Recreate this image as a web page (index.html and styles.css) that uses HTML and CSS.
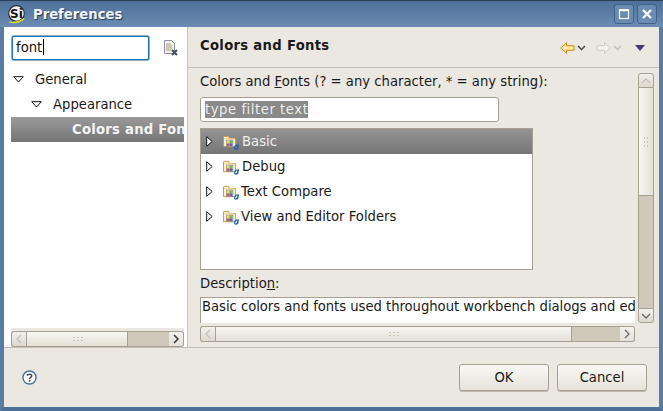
FILE: index.html
```html
<!DOCTYPE html>
<html lang="en">
<head>
    <meta charset="UTF-8">
    <title>Preferences</title>
    <link rel="stylesheet" href="styles.css">
</head>
<body>
<div class="window">
    <div class="titlebar">
        <svg class="app-icon" width="18" height="19" viewBox="0 0 18 19">
            <circle cx="8.5" cy="8.5" r="7.8" fill="#f7f7f2" stroke="#26303c" stroke-width="1.2"/>
            <path d="M1 16.5C7 17.5 12 16 16 13L16.5 14.5C12 18 6 19 1 17.5Z" fill="#e6dc2e"/>
            <text x="2" y="13" class="app-icon-text">Si</text>
        </svg>
        <span class="title">Preferences</span>
        <div class="win-buttons">
            <div class="win-btn">
                <svg width="12" height="12" viewBox="0 0 12 12"><rect x="1.5" y="2" width="9" height="8.5" fill="none" stroke="#fff" stroke-width="1.2"/><path d="M1 2.2h10" stroke="#fff" stroke-width="2"/></svg>
            </div>
            <div class="win-btn">
                <svg width="12" height="12" viewBox="0 0 12 12"><path d="M2 2l8 8M10 2l-8 8" stroke="#fff" stroke-width="2.2"/></svg>
            </div>
        </div>
    </div>

    <div class="main">
        <div class="left">
            <div class="search-row">
                <div class="search-frame">
                    <div class="search-box">font<span class="caret"></span></div>
                </div>
                <svg class="clear-icon" width="16" height="16" viewBox="0 0 16 16">
                    <path d="M1.5 .5h7l3 3v10h-10z" fill="#f2f2e6" stroke="#8b93a6"/>
                    <path d="M3 4h5M3 6h6M3 8h6M3 10h5" stroke="#a8a078"/>
                    <path d="M9 10l5 5M14 10l-5 5" stroke="#4a5260" stroke-width="2.2"/>
                </svg>
            </div>
            <div class="tree">
                <div class="tree-row level-0"><svg class="tw-open" width="11" height="7"><use href="#tw-down"/></svg>General</div>
                <div class="tree-row level-1"><svg class="tw-open" width="11" height="7"><use href="#tw-down"/></svg>Appearance</div>
                <div class="tree-row level-2 selected-row"><span>Colors and Fonts</span></div>
            </div>
            <div class="hscroll left-scroll">
                <div class="sb-btn"><svg width="8" height="10" viewBox="0 0 8 10"><path d="M6 1L2 5l4 4" class="chev-off"/></svg></div>
                <div class="thumb left-thumb"><span class="grip-h"></span></div>
                <div class="trough"></div>
                <div class="sb-btn sb-end"><svg width="8" height="10" viewBox="0 0 8 10"><path d="M2 1l4 4-4 4" class="chev-on"/></svg></div>
            </div>
        </div>

        <div class="right">
            <div class="page-header">
                <span class="page-title">Colors and Fonts</span>
                <div class="nav-icons">
                    <svg width="15" height="12" viewBox="0 0 15 12"><path d="M.8 6L6.5 .7v3h7.5v4.6H6.5v3z" fill="#fde9a0" stroke="#c98a10"/></svg>
                    <svg class="nav-chev" width="9" height="6" viewBox="0 0 9 6"><path d="M1 1l3.5 3.5L8 1" fill="none" stroke="#444" stroke-width="1.5"/></svg>
                    <svg class="nav-gap" width="15" height="12" viewBox="0 0 15 12"><path d="M14.2 6L8.5 .7v3H1v4.6h7.5v3z" fill="#f2f0ea" stroke="#cfccc4"/></svg>
                    <svg class="nav-chev" width="9" height="6" viewBox="0 0 9 6"><path d="M1 1l3.5 3.5L8 1" fill="none" stroke="#c4c2bb" stroke-width="1.5"/></svg>
                    <svg class="nav-menu" width="10" height="6" viewBox="0 0 10 6"><path d="M0 0h10L5 6z" fill="#3f3a72"/></svg>
                </div>
            </div>
            <div class="page-body">
                <div class="content">
                    <div class="label">Colors and <u>F</u>onts (? = any character, * = any string):</div>
                    <div class="filter-box"><span class="filter-text">type filter text</span></div>
                    <div class="list">
                        <div class="list-row list-selected"><svg class="tw-closed" width="7" height="11"><use href="#tw-right"/></svg><svg class="folder" width="17" height="16" viewBox="0 0 18 17"><use href="#folder"/></svg><span class="pad-a">Basic</span></div>
                        <div class="list-row"><svg class="tw-closed" width="7" height="11"><use href="#tw-right"/></svg><svg class="folder" width="17" height="16" viewBox="0 0 18 17"><use href="#folder"/></svg><span class="pad-a">Debug</span></div>
                        <div class="list-row"><svg class="tw-closed" width="7" height="11"><use href="#tw-right"/></svg><svg class="folder" width="17" height="16" viewBox="0 0 18 17"><use href="#folder"/></svg>Text Compare</div>
                        <div class="list-row"><svg class="tw-closed" width="7" height="11"><use href="#tw-right"/></svg><svg class="folder" width="17" height="16" viewBox="0 0 18 17"><use href="#folder"/></svg>View and Editor Folders</div>
                    </div>
                    <div class="label desc-label">Descriptio<u>n</u>:</div>
                    <div class="desc-box">Basic colors and fonts used throughout workbench dialogs and editors.</div>
                    <div class="hscroll body-scroll">
                        <div class="sb-btn"><svg width="8" height="10" viewBox="0 0 8 10"><path d="M6 1L2 5l4 4" class="chev-off"/></svg></div>
                        <div class="thumb body-thumb"><span class="grip-h"></span></div>
                        <div class="trough"></div>
                        <div class="sb-btn sb-end"><svg width="8" height="10" viewBox="0 0 8 10"><path d="M2 1l4 4-4 4" class="chev-off dark"/></svg></div>
                    </div>
                </div>
                <div class="vscroll">
                    <div class="sb-btn-v"><svg width="10" height="8" viewBox="0 0 10 8"><path d="M1 6l4-4 4 4" class="chev-off"/></svg></div>
                    <div class="thumb-v"><span class="grip-v"></span></div>
                    <div class="trough"></div>
                    <div class="sb-btn-v sb-end-v"><svg width="10" height="8" viewBox="0 0 10 8"><path d="M1 2l4 4 4-4" class="chev-off dark"/></svg></div>
                </div>
            </div>
        </div>
    </div>

    <div class="footer">
        <svg class="help" width="15" height="15" viewBox="0 0 16 16">
            <circle cx="8" cy="8" r="7" fill="#fff" stroke="#4a6f9c" stroke-width="1.5"/>
            <path d="M5.6 6.2C5.6 3.8 10.4 3.8 10.4 6.2 10.4 8 8 7.8 8 9.8" fill="none" stroke="#3a4a66" stroke-width="1.6"/>
            <rect x="7.2" y="10.8" width="1.7" height="1.7" fill="#3a4a66"/>
        </svg>
        <div class="buttons">
            <button class="btn">OK</button>
            <button class="btn">Cancel</button>
        </div>
    </div>
</div>

<svg width="0" height="0" class="defs">
    <defs>
        <path id="tw-down" d="M.7 .7h9.6L5.5 6z" fill="#fff" stroke="#111"/>
        <path id="tw-right" d="M.7 .7v9.6L6.2 5.5z" fill="#fff" stroke="#111"/>
        <g id="folder">
            <path d="M1.5 3V13.5H14.5V5H8L7 2.5H2z" fill="#fdf2cf" stroke="#c2924a"/>
            <path d="M2.5 5H13.5" stroke="#f3cf7e"/>
            <rect x="4.5" y="6.5" width="7" height="7" fill="#d8d4b8" stroke="#8c8c7c" stroke-width=".7"/>
            <rect x="5" y="7" width="3" height="3" fill="#e8d968"/>
            <rect x="8" y="7" width="3" height="3" fill="#6fb86f"/>
            <rect x="5" y="10" width="3" height="3" fill="#d8584e"/>
            <rect x="8" y="10" width="3" height="3" fill="#4a6fc0"/>
            <path d="M17.6 11 16.4 16M16.8 12C13.8 10.4 12 16.6 15 16 15.8 15.8 16.4 14.6 16.6 13" fill="none" stroke="#1f5fa8" stroke-width="1.3"/>
        </g>
    </defs>
</svg>
</body>
</html>
```
FILE: styles.css
```css
html, body {
    margin: 0;
    padding: 0;
}
body {
    font-family: "DejaVu Sans", sans-serif;
    font-size: 13.2px;
    color: #1a1a1a;
    overflow: hidden;
}
.defs {
    display: block;
    height: 0;
}
.window {
    width: 663px;
    height: 411px;
    box-sizing: border-box;
    display: flex;
    flex-direction: column;
    background: #ebe8e1;
    border: 4px solid #5a7ca3;
    border-top: 0;
    border-bottom-color: #4c6f97;
}
.titlebar {
    height: 27px;
    margin: 0 -4px;
    padding: 0 6px 0 8px;
    display: flex;
    align-items: center;
    flex: none;
    background: linear-gradient(#4f7199, #6b8db4);
    border-top: 1px solid #2c3e55;
    box-sizing: border-box;
}
.app-icon {
    flex: none;
    margin-top: 1px;
}
.app-icon-text {
    font-family: "DejaVu Sans", sans-serif;
    font-size: 12px;
    font-weight: bold;
    fill: #111;
}
.title {
    margin-left: 7px;
    color: #f3f5f8;
    font-weight: bold;
    font-size: 13.2px;
    text-shadow: 1px 1px 1px #2a3d55;
}
.win-buttons {
    margin-left: auto;
    display: flex;
    gap: 3px;
}
.win-btn {
    width: 20px;
    height: 20px;
    box-sizing: border-box;
    border: 1px solid #40618a;
    border-radius: 3px;
    background: #6a8cb2;
    display: flex;
    align-items: center;
    justify-content: center;
}
.main {
    flex: 1;
    display: flex;
    min-height: 0;
}
.left {
    width: 183px;
    flex: none;
    background: #fff;
    display: flex;
    flex-direction: column;
    border-right: 1px solid #c9c4ba;
}
.search-row {
    display: flex;
    align-items: center;
    height: 40px;
    padding-left: 7px;
    padding-top: 1px;
    box-sizing: border-box;
}
.search-frame {
    background: #ebe8e1;
    padding: 1px;
}
.search-box {
    width: 132px;
    height: 22px;
    border: 1px solid #1f75b8;
    border-radius: 2px;
    box-shadow: 0 0 0 .5px #1f75b8;
    padding-left: 3px;
    line-height: 21px;
    background: #fff;
    color: #111;
}
.caret {
    display: inline-block;
    width: 1px;
    height: 16px;
    margin-left: 1px;
    background: #000;
    vertical-align: -3px;
}
.clear-icon {
    margin-left: 13px;
}
.tree {
    flex: 1;
    overflow: hidden;
    margin-left: 7px;
    margin-right: 3px;
}
.tree-row {
    height: 25px;
    line-height: 25px;
    display: flex;
    align-items: center;
    white-space: nowrap;
}
.level-0 {
    padding-left: 2px;
}
.level-1 {
    padding-left: 20px;
}
.level-2 {
    padding-left: 61px;
}
.selected-row {
    background: linear-gradient(#9a9a9a, #767676);
    color: #f4f4f4;
    font-weight: bold;
    letter-spacing: .25px;
    overflow: hidden;
}
.tw-open {
    flex: none;
    margin-right: 11px;
}
.tw-closed {
    flex: none;
    margin-left: 5px;
    margin-right: 9px;
}
.hscroll {
    height: 16px;
    display: flex;
    flex: none;
    box-sizing: border-box;
}
.left-scroll {
    margin: 0 3px 0 7px;
    background: #ebe8e1;
    height: 19px;
    padding-top: 3px;
}
.sb-btn {
    width: 15px;
    flex: none;
    box-sizing: border-box;
    border: 1px solid #a79f90;
    border-right: 0;
    border-radius: 3px 0 0 3px;
    background: linear-gradient(#f3f1ec, #dcd8ce);
    display: flex;
    align-items: center;
    justify-content: center;
}
.sb-end {
    border-right: 1px solid #a79f90;
    border-left: 0;
    border-radius: 0 3px 3px 0;
    background: linear-gradient(#f3f1ec, #e4e1d9);
}
.chev-off {
    fill: none;
    stroke: #c4c0b6;
    stroke-width: 1.3;
}
.chev-off.dark {
    stroke: #6d6a62;
}
.chev-on {
    fill: none;
    stroke: #333;
    stroke-width: 1.5;
}
.thumb {
    box-sizing: border-box;
    border: 1px solid #a79f90;
    background: linear-gradient(#f8f7f3, #e2dfd6);
    display: flex;
    align-items: center;
    justify-content: center;
    flex: none;
}
.left-thumb {
    width: 102px;
}
.body-thumb {
    width: 357px;
}
.trough {
    flex: 1;
    background: #cfc9bc;
    border-top: 1px solid #a79f90;
    border-bottom: 1px solid #a79f90;
}
.grip-h {
    width: 11px;
    height: 6px;
    background-image: radial-gradient(circle, #c9c5ba 1px, transparent 1px);
    background-size: 4px 3px;
}
.grip-v {
    width: 6px;
    height: 11px;
    background-image: radial-gradient(circle, #c9c5ba 1px, transparent 1px);
    background-size: 3px 4px;
}
.right {
    flex: 1;
    min-width: 0;
    display: flex;
    flex-direction: column;
}
.page-header {
    height: 41px;
    flex: none;
    box-sizing: border-box;
    border-bottom: 1px solid #c4bfb4;
    padding: 0 14px 0 12px;
    display: flex;
    align-items: center;
    justify-content: space-between;
}
.page-title {
    font-weight: bold;
    letter-spacing: .3px;
    margin-top: -4px;
}
.nav-icons {
    display: flex;
    align-items: center;
    margin-top: 2px;
    height: 12px;
}
.nav-chev {
    margin-left: 2px;
}
.nav-gap {
    margin-left: 10px;
}
.nav-menu {
    margin-left: 13px;
}
.page-body {
    flex: 1;
    min-height: 0;
    display: flex;
    padding: 5px 5px 0 12px;
    gap: 3px;
}
.content {
    flex: 1;
    min-width: 0;
    display: flex;
    flex-direction: column;
}
.label {
    height: 20px;
    line-height: 18px;
    white-space: nowrap;
}
.filter-box {
    width: 299px;
    height: 25px;
    box-sizing: border-box;
    border: 1px solid #a79f90;
    border-radius: 3px;
    background: #fff;
    padding: 3px 3px 3px 4px;
    margin-top: 4px;
    line-height: 17px;
}
.filter-text {
    background: #8a8a8a;
    color: #eeeeee;
    display: inline-block;
    line-height: 17px;
    letter-spacing: .55px;
}
.list {
    width: 333px;
    height: 142px;
    box-sizing: border-box;
    margin-top: 6px;
    border: 1px solid #a79f90;
    background: #fff;
}
.list-row {
    height: 25px;
    display: flex;
    align-items: center;
    white-space: nowrap;
}
.list-selected {
    background: linear-gradient(#949494, #767676);
    color: #f0f0f0;
}
.folder {
    flex: none;
    margin-right: 2px;
}
.pad-a {
    margin-left: 1px;
}
.desc-label {
    margin-top: 5px;
}
.desc-box {
    height: 26px;
    box-sizing: border-box;
    margin-top: 2px;
    background: #fff;
    border-top: 1px solid #a79f90;
    border-left: 1px solid #a79f90;
    padding-left: 1px;
    line-height: 17px;
    letter-spacing: -.03px;
    white-space: nowrap;
    overflow: hidden;
}
.body-scroll {
    margin-top: 3px;
}
.vscroll {
    width: 16px;
    height: 250px;
    display: flex;
    flex-direction: column;
    flex: none;
}
.sb-btn-v {
    height: 15px;
    box-sizing: border-box;
    border: 1px solid #a79f90;
    border-radius: 3px 3px 0 0;
    background: linear-gradient(#f3f1ec, #dcd8ce);
    display: flex;
    align-items: center;
    justify-content: center;
    flex: none;
}
.sb-end-v {
    border-radius: 0 0 3px 3px;
}
.thumb-v {
    height: 108px;
    flex: none;
    box-sizing: border-box;
    border: 1px solid #a79f90;
    border-top: 0;
    background: linear-gradient(90deg, #f8f7f3, #e2dfd6);
    display: flex;
    align-items: center;
    justify-content: center;
}
.vscroll .trough {
    border: 0;
    border-left: 1px solid #a79f90;
    border-right: 1px solid #a79f90;
}
.footer {
    height: 60px;
    flex: none;
    box-sizing: border-box;
    border-top: 1px solid #c4bfb4;
    display: flex;
    align-items: center;
    justify-content: space-between;
    padding: 0 12px 0 18px;
}
.help {
    flex: none;
}
.buttons {
    display: flex;
    gap: 8px;
}
.btn {
    width: 90px;
    height: 27px;
    border: 1px solid #a79f90;
    border-radius: 3px;
    background: linear-gradient(#f8f7f3, #e6e3da);
    box-shadow: 0 1px 0 #bdb8ac;
    font-family: "DejaVu Sans", sans-serif;
    font-size: 13.2px;
    color: #1a1a1a;
    padding: 0;
}
```
